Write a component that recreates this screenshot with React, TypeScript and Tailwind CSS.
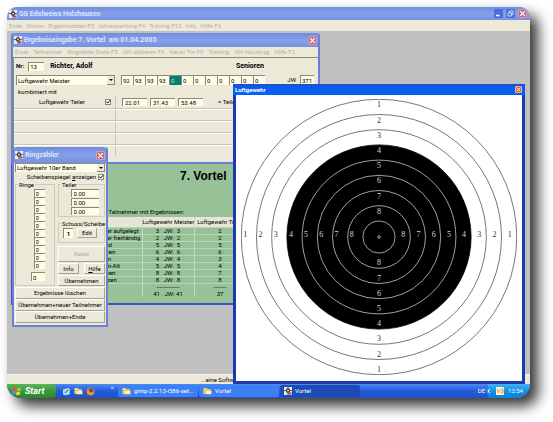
import { useState, type ReactNode } from 'react';
import clsx from 'clsx';

const SHOTS = ['92', '93', '93', '93', '0', '0', '0', '0', '0', '0', '0', '0'];
const DIVIDERS = ['22.01', '31.43', '53.48'];

const RESULTS = [
  { group: 'Schüler aufgelegt', master: '3   JW:  3', divider: '2' },
  { group: 'Schüler freihändig', master: '2   JW:  2', divider: '2' },
  { group: 'Jugend', master: '5   JW:  5', divider: '5' },
  { group: 'Junioren', master: '6   JW:  6', divider: '6' },
  { group: 'Damen', master: '4   JW:  4', divider: '3' },
  { group: 'Damen-Alt', master: '5   JW:  5', divider: '4' },
  { group: 'Senioren', master: '8   JW:  8', divider: '7' },
  { group: 'Schützen', master: '8   JW:  8', divider: '8' },
  { group: '', master: '--------------', divider: '--------' },
  { group: '', master: '41   JW: 41', divider: '37' },
];

const RINGS = [1, 2, 3, 4, 5, 6, 7, 8, 9];
const CENTER = 138;
const ringRadius = (ring: number) => 137.7 - (ring - 1) * 15.2;

function TargetIcon() {
  return (
    <svg viewBox="0 0 8 8" className="size-2 shrink-0" aria-hidden="true">
      <rect width="8" height="8" fill="#e9e9ee" />
      <circle cx="4" cy="3.6" r="2.3" fill="#555" />
      <path d="M4 0v8M0 3.6h8" stroke="#333" strokeWidth="0.8" />
      <circle cx="4" cy="3.6" r="0.8" fill="#fff" />
      <path d="M4.5 5.5h3v2h-3z" fill="#c8323c" />
    </svg>
  );
}

function FolderIcon() {
  return (
    <svg viewBox="0 0 9 8" className="h-2 w-[9px] shrink-0" aria-hidden="true">
      <path d="M0.5 1h3l1 1h3v5h-7z" fill="#f2d878" />
      <path d="M2.5 3.4h6v3.9h-6z" fill="#fff3c4" stroke="#b98f2e" strokeWidth="0.4" />
    </svg>
  );
}

function CloseButton({ small }: { small?: boolean }) {
  return (
    <button
      type="button"
      aria-label="Schließen"
      className={clsx(
        'grid shrink-0 place-items-center rounded-[1px] border',
        small ? 'size-[7px] border-[#f0b8a8] bg-[#d9624a]' : 'size-[9px] border-[#cf9db4] bg-[#bd6a80]',
      )}
    >
      <svg viewBox="0 0 6 6" className="size-full" aria-hidden="true">
        <path d="M1 1l4 4M5 1l-4 4" stroke="#fff" strokeWidth="1.1" />
      </svg>
    </button>
  );
}

function MenuBar({ items, className }: { items: string[]; className?: string }) {
  return (
    <nav className={clsx('flex shrink-0 items-center overflow-hidden bg-[#ece9d8] font-[Lato,sans-serif] text-[#b4b1a1]', className)}>
      {items.map((item) => (
        <button key={item} type="button" className="whitespace-nowrap">
          {item}
        </button>
      ))}
    </nav>
  );
}

function Field({
  label,
  value,
  active,
  className,
}: {
  label: string;
  value: string;
  active?: boolean;
  className?: string;
}) {
  return (
    <input
      aria-label={label}
      defaultValue={value}
      className={clsx(
        'block min-w-0 border-t border-l border-[#8c8a7c] outline-none',
        active ? 'bg-[#008078] text-[#bfe6c8]' : 'bg-[#fffde6]',
        className,
      )}
    />
  );
}

function Dropdown({ label, value, className }: { label: string; value: string; className?: string }) {
  return (
    <div className={clsx('flex items-stretch border-t border-l border-[#8c8a7c] bg-[#fffde6]', className)}>
      <select aria-label={label} className="min-w-0 flex-1 appearance-none px-px outline-none">
        <option>{value}</option>
      </select>
      <span className="grid w-2 place-items-center border-r border-b border-[#8c8a7c] bg-[#ece9d8]">
        <svg viewBox="0 0 4 2" className="h-[2px] w-1" aria-hidden="true">
          <path d="M0 0h4l-2 2z" fill="#000" />
        </svg>
      </span>
    </div>
  );
}

function CheckField({ label, className }: { label: ReactNode; className?: string }) {
  const [checked, setChecked] = useState(true);
  return (
    <label className={clsx('flex items-center justify-end', className)}>
      <span className="whitespace-nowrap">{label}</span>
      <span className="grid size-1.5 *:col-start-1 *:row-start-1">
        <input
          type="checkbox"
          checked={checked}
          onChange={(event) => setChecked(event.target.checked)}
          className="size-1.5 appearance-none border border-[#8c8a7c] bg-white"
        />
        {checked && (
          <svg viewBox="0 0 6 6" className="pointer-events-none size-1.5" aria-hidden="true">
            <path d="M1.4 2.6l1.3 1.5 2.1-2.7" fill="none" stroke="#000" strokeWidth="1" />
          </svg>
        )}
      </span>
    </label>
  );
}

function PushButton({ children, disabled, className }: { children: ReactNode; disabled?: boolean; className?: string }) {
  return (
    <button
      type="button"
      disabled={disabled}
      className={clsx(
        'flex items-center justify-center border border-t-white border-r-[#a5a294] border-b-[#a5a294] border-l-white bg-[#ece9d8] whitespace-nowrap disabled:text-[#b4b1a1]',
        className,
      )}
    >
      {children}
    </button>
  );
}

function GroupBox({ title, children, className }: { title: string; children: ReactNode; className?: string }) {
  return (
    <fieldset className={clsx('min-w-0 border border-[#cfccbb]', className)}>
      <legend className="ml-[2px] px-px leading-[7px] whitespace-nowrap">{title}</legend>
      {children}
    </fieldset>
  );
}

function ResultEntryWindow() {
  return (
    <section className="absolute top-[2px] left-1 flex h-[131px] w-[309px] flex-col rounded-t-[3px] border-2 border-t-0 border-[#6a80d8] bg-[#ece9d8]">
      <header className="flex h-3.5 shrink-0 items-center gap-[2px] bg-linear-to-b from-[#6f8ce0] via-[#85a0e8] to-[#7591e0] px-px text-[7px] font-bold text-[#dbe4fa]">
        <TargetIcon />
        <h2 className="flex-1 whitespace-pre">Ergebniseingabe 7. Vortel  am 01.04.2005</h2>
        <CloseButton />
      </header>
      <MenuBar
        className="h-2.5 gap-[5px] px-[2px]"
        items={['Ende', 'Teilnehmer', 'Ringzähler Ende F3', 'JW addieren F5', 'Neuer Tln F9', 'Training', 'JW-Nachtrag', 'Hilfe F1']}
      />
      <div className="flex-1 border-t border-l border-[#8c8a7c] pt-px">
        <div className="flex h-3.5 items-center px-[2px] font-bold">
          <label className="flex items-center gap-1">
            Nr:
            <Field label="Nr" value="13" className="h-[9px] w-4 px-px font-normal" />
          </label>
          <span className="ml-1.5 flex-1 text-[7px]">Richter, Adolf</span>
          <span className="mr-[52px] text-[7px]">Senioren</span>
        </div>
        <div className="flex h-3.5 items-center">
          <Dropdown label="Disziplin" value="Luftgewehr Meister" className="ml-[2px] h-2.5 w-[99px]" />
          <div className="ml-1.5 flex flex-1">
            {SHOTS.map((shot, index) => (
              <Field
                key={index}
                label={`Serie ${index + 1}`}
                value={shot}
                active={index === 4}
                className="h-2.5 w-3 px-px"
              />
            ))}
          </div>
          <label className="mr-1 flex items-center gap-1">
            JW
            <Field label="JW" value="371" className="h-2.5 w-3.5 px-px" />
          </label>
        </div>
        <p className="flex h-[9px] items-center px-1">kombiniert mit</p>
        <div className="grid grid-cols-[102px_1fr]">
          <CheckField label="Luftgewehr Teiler" className="h-3 gap-5 border-r border-[#c9c6b6] pr-1" />
          <div className="flex items-center gap-[3px] pl-1.5">
            {DIVIDERS.map((value, index) => (
              <Field key={value} label={`Teiler ${index + 1}`} value={value} className="h-2 w-[25px] px-[2px]" />
            ))}
            <span className="ml-3">= Teiler</span>
          </div>
          {[0, 1, 2, 3].map((row) => (
            <div key={row} className="col-span-2 grid h-3 grid-cols-subgrid border-t border-[#c9c6b6]">
              <div className="border-t border-r border-t-white border-r-[#c9c6b6]" />
              <div className="border-t border-white" />
            </div>
          ))}
        </div>
      </div>
    </section>
  );
}

function SummaryWindow() {
  return (
    <section className="absolute top-[131px] left-1 w-[309px] border-2 border-[#3a56c4] bg-[#97c297] pb-1.5">
      <h2 className="pt-1 pl-[167px] font-['Liberation_Sans',sans-serif] text-[12px] leading-4 font-bold">7. Vortel</h2>
      <p className="mt-6 ml-[76px] h-[9px] leading-[8px]">Anzahl Teilnehmer mit Ergebnissen:</p>
      <table className="ml-[79px] w-[208px] table-fixed border-collapse text-center">
        <thead>
          <tr className="border-b border-[#b6d6b4] bg-[#e6e6d8]">
            <th className="h-2.5 w-[50px] p-0" />
            <th className="w-[52px] border-x border-[#c4dcc0] p-0 leading-[9px] font-normal whitespace-nowrap">Luftgewehr Meister</th>
            <th className="w-[52px] p-0 leading-[9px] font-normal whitespace-nowrap">Luftgewehr Teiler</th>
            <th className="p-0" />
          </tr>
        </thead>
        <tbody>
          {RESULTS.map((row, index) => (
            <tr key={index} className={clsx('h-[7px]', index < 8 && 'border-b border-[#b6d6b4]')}>
              <td className="p-0 text-left leading-[6px] whitespace-nowrap">{row.group}</td>
              <td className="border-x border-[#c4dcc0] p-0 leading-[6px] whitespace-pre">{row.master}</td>
              <td className="border-r border-[#c4dcc0] p-0 leading-[6px]">{row.divider}</td>
              <td className="p-0" />
            </tr>
          ))}
        </tbody>
      </table>
    </section>
  );
}

function RingCounterWindow() {
  return (
    <section className="absolute top-[116px] left-[5px] w-24 rounded-t-[3px] border-2 border-t-0 border-[#6a80d8] bg-[#ece9d8] pb-[2px]">
      <header className="flex h-4 items-center gap-[2px] rounded-t-[3px] bg-linear-to-b from-[#6f8ce0] via-[#85a0e8] to-[#7591e0] px-px text-[7px] font-bold text-[#dbe4fa]">
        <TargetIcon />
        <h2 className="flex-1">Ringzähler</h2>
        <CloseButton />
      </header>
      <div className="px-px">
        <Dropdown label="Band" value="Luftgewehr 10er Band" className="h-[9px]" />
        <CheckField label={<>Scheibenspiegel <u>a</u>nzeigen</>} className="h-[9px] gap-[2px] pr-px" />
        <div className="flex gap-[3px]">
          <GroupBox title="Ringe" className="w-10 pb-1">
            <div className="flex flex-col items-center pt-px pl-2">
              {Array.from({ length: 10 }, (_, index) => (
                <Field key={index} label={`Ring ${index + 1}`} value="0" className="h-2 w-[11px] px-px" />
              ))}
              <Field label="Summe" value="0" className="mt-[3px] mr-[2px] h-[9px] w-3.5 px-px" />
            </div>
          </GroupBox>
          <div className="flex min-w-0 flex-1 flex-col">
            <GroupBox title="Teiler" className="pb-px">
              <div className="flex flex-col items-center gap-px pt-px pl-1.5">
                {[1, 2, 3].map((index) => (
                  <Field key={index} label={`Teiler ${index}`} value="0.00" className="h-2 w-7 px-[2px]" />
                ))}
              </div>
            </GroupBox>
            <GroupBox title="Schuss/Scheibe" className="mt-[3px] pb-1">
              <div className="flex items-center gap-1 pt-px pl-1">
                <Field label="Schuss/Scheibe" value="1" className="h-2.5 w-2.5 border-0 text-center font-bold" />
                <PushButton className="h-2.5 w-5">Edit</PushButton>
              </div>
            </GroupBox>
            <PushButton disabled className="mt-[3px] h-4">Reset</PushButton>
            <div className="my-px flex justify-between">
              <PushButton className="h-[11px] w-[21px]">Info</PushButton>
              <PushButton className="h-[11px] w-[21px]">
                <u>H</u>ilfe
              </PushButton>
            </div>
            <PushButton className="h-[11px]">Übernehmen</PushButton>
          </div>
        </div>
        <div className="mt-px flex flex-col">
          <PushButton className="h-3">Ergebnisse löschen</PushButton>
          <PushButton className="h-3">Übernehmen+neuer Teilnehmer</PushButton>
          <PushButton className="h-3">Übernehmen+Ende</PushButton>
        </div>
      </div>
    </section>
  );
}

function ShootingTarget() {
  return (
    <svg viewBox="0 0 276 276" className="w-full max-w-[276px]" role="img" aria-label="Luftgewehr">
      {RINGS.map((ring) => (
        <circle
          key={ring}
          cx={CENTER}
          cy={CENTER}
          r={ringRadius(ring)}
          fill={ring < 4 ? '#fff' : '#000'}
          stroke={ring < 4 ? '#555' : ring === 4 ? '#000' : '#c8c8c8'}
          strokeWidth="0.8"
        />
      ))}
      <circle cx={CENTER} cy={CENTER} r="1.3" fill="none" stroke="#ddd" strokeWidth="0.7" />
      {RINGS.slice(0, 8).map((ring) => {
        const radius = ringRadius(ring);
        return (
          <g
            key={ring}
            fill={ring < 4 ? '#333' : '#d8d8d8'}
            fontFamily="'Liberation Serif', serif"
            fontSize="8"
            textAnchor="middle"
          >
            <text x={CENTER} y={CENTER - radius + 8}>{ring}</text>
            <text x={CENTER} y={CENTER + radius - 3}>{ring}</text>
            <text x={CENTER - radius + 4} y={CENTER}>{ring}</text>
            <text x={CENTER + radius - 7} y={CENTER}>{ring}</text>
          </g>
        );
      })}
    </svg>
  );
}

function TargetWindow() {
  return (
    <section className="absolute top-[53px] right-[5px] -bottom-2.5 left-[226px] flex flex-col border-[3px] border-t-0 border-[#1a3bb0] bg-white">
      <header className="-mx-[3px] flex h-[11px] shrink-0 items-center justify-between bg-linear-to-b from-[#1b4fd0] via-[#0560f4] to-[#0560f4] pr-[3px] pl-[2px] font-bold text-white">
        <h2>Luftgewehr</h2>
        <CloseButton small />
      </header>
      <div className="flex min-h-0 flex-1 items-start justify-center pt-1">
        <ShootingTarget />
      </div>
    </section>
  );
}

function TaskButton({ icon, label, active }: { icon: ReactNode; label: string; active?: boolean }) {
  return (
    <button
      type="button"
      className={clsx(
        'flex w-20 min-w-0 items-center gap-[3px] rounded-[2px] px-1 text-white',
        active ? 'bg-[#1d4cb4]' : 'bg-[#3d80f3]',
      )}
    >
      {icon}
      <span className="whitespace-nowrap">{label}</span>
    </button>
  );
}

function Taskbar() {
  return (
    <footer className="relative flex h-3.5 shrink-0 items-stretch bg-linear-to-b from-[#4a8af5] via-[#245bdb] to-[#2151c8]">
      <button
        type="button"
        className="flex w-[49px] shrink-0 items-center gap-[3px] rounded-r-[4px] bg-linear-to-b from-[#5cb45c] via-[#3a9a3a] to-[#2f842f] pl-[5px] text-[9px] font-bold text-white italic"
      >
        <svg viewBox="0 0 10 10" className="size-2.5" aria-hidden="true">
          <path d="M1.2 1.4q2-1 3.6 0l-.6 3.2q-1.8-.9-3.6 0z" fill="#ee5a2a" />
          <path d="M5.4 1.7q1.8.9 3.8 0l-.7 3.2q-1.9.9-3.7 0z" fill="#8fd14a" />
          <path d="M.5 5.2q1.8-.9 3.6 0l-.7 3.2q-1.7-.9-3.4 0z" fill="#5a8ff0" />
          <path d="M4.7 5.5q1.8.9 3.7 0l-.7 3.2q-1.9.9-3.7 0z" fill="#f8d23a" />
        </svg>
        Start
      </button>
      <div className="flex w-[62px] shrink-0 items-center gap-[3px] pl-1.5 text-white">
        <svg viewBox="0 0 9 9" className="size-[9px]" aria-hidden="true">
          <path d="M1 2.5l5-1.5 2 1-.5 5.5-5 .8-1.5-1z" fill="#b9dcf5" />
          <path d="M2.5 5.8l3.5-3.6.8.8-3.5 3.5z" fill="#3379c4" />
        </svg>
        <FolderIcon />
        <svg viewBox="0 0 9 9" className="size-[9px]" aria-hidden="true">
          <circle cx="4.5" cy="4.5" r="4" fill="#e5702a" />
          <circle cx="5" cy="3.6" r="2.3" fill="#3c5a9c" />
          <path d="M1 2.5q2 0 2.5 2.2 2 2 4.6-.8-.2 4-3.8 4.2-3.4-.4-3.3-5.6z" fill="#f39a32" />
        </svg>
        <span className="ml-auto self-start pr-1 text-[8px] leading-[8px] text-[#c9dafb]">»</span>
      </div>
      <div className="flex min-w-0 flex-1 gap-px py-px">
        <TaskButton icon={<FolderIcon />} label="gimp-2.2.13-i586-set..." />
        <TaskButton icon={<FolderIcon />} label="Vortel" />
        <TaskButton icon={<TargetIcon />} label="Vortel" active />
      </div>
      <div className="flex shrink-0 items-center text-white">
        <span className="pr-[3px]">DE</span>
        <div className="flex h-full items-center gap-1 bg-linear-to-b from-[#3fb4f6] via-[#1290e8] to-[#0f7fd6] pr-[7px]">
          <button
            type="button"
            aria-label="Ausgeblendete Symbole einblenden"
            className="-ml-[2px] grid size-1.5 place-items-center rounded-full bg-[#2f8df0]"
          >
            <svg viewBox="0 0 6 6" className="size-1.5" aria-hidden="true">
              <path d="M4 1l-2 2 2 2" fill="none" stroke="#fff" strokeWidth="1" />
            </svg>
          </button>
          <svg viewBox="0 0 8 8" className="size-2" aria-hidden="true">
            <rect width="8" height="8" fill="#fdf3d8" />
            <path d="M1 2l1.5 4 1.3-4M5 2h2v2h-1.5M7 4v2h-2" fill="none" stroke="#e9a12c" strokeWidth="1" />
          </svg>
          <time>12:54</time>
        </div>
      </div>
    </footer>
  );
}

export default function App() {
  return (
    <div className="flex h-screen min-h-96 flex-col bg-white pt-[7px] pr-[23px] pb-6 pl-[7px] font-[Roboto,'Liberation_Sans',sans-serif] text-[6px] leading-[8px] text-black">
      <main className="flex min-h-0 flex-1 flex-col overflow-hidden rounded-[10px] rounded-b-[14px] bg-[#c0c0c0] shadow-[8px_8px_14px_rgba(0,0,0,0.8)]">
        <header className="flex h-[13px] shrink-0 items-center gap-[2px] bg-linear-to-b from-[#6f8ce0] via-[#85a0e8] to-[#7591e0] pr-[3px] pl-[2px] text-[7px] font-bold text-[#dbe4fa]">
          <TargetIcon />
          <h1 className="flex-1">SG Edelweiss Holzhausen</h1>
          <div className="flex gap-[3px]">
            <button type="button" aria-label="Minimieren" className="size-[9px] rounded-[1px] bg-[#4a6fdc]">
              <svg viewBox="0 0 9 9" aria-hidden="true">
                <path d="M2 6.5h3.5" stroke="#fff" strokeWidth="1.4" />
              </svg>
            </button>
            <button type="button" aria-label="Wiederherstellen" className="size-[9px] rounded-[1px] bg-[#4a6fdc]">
              <svg viewBox="0 0 9 9" aria-hidden="true">
                <path d="M3.5 3.5v-1.5h3.5v3.5h-1.5M2 3.8h3.4v3.2h-3.4z" fill="none" stroke="#dbe4fa" strokeWidth="0.9" />
              </svg>
            </button>
            <CloseButton />
          </div>
        </header>
        <MenuBar
          className="h-[11px] gap-1 px-[2px]"
          items={['Ende', 'Stamm', 'Ergebnisdaten F3', 'Jahreswertung F4', 'Training F11', 'Info', 'Hilfe F1']}
        />
        <div className="relative z-10 min-h-0 flex-1">
          <SummaryWindow />
          <ResultEntryWindow />
          <RingCounterWindow />
          <TargetWindow />
        </div>
        <div className="flex h-2.5 shrink-0 items-center border-t border-[#f8f6ea] bg-[#ece9d8] pl-[194px]">
          ...eine Software
        </div>
        <Taskbar />
      </main>
    </div>
  );
}
